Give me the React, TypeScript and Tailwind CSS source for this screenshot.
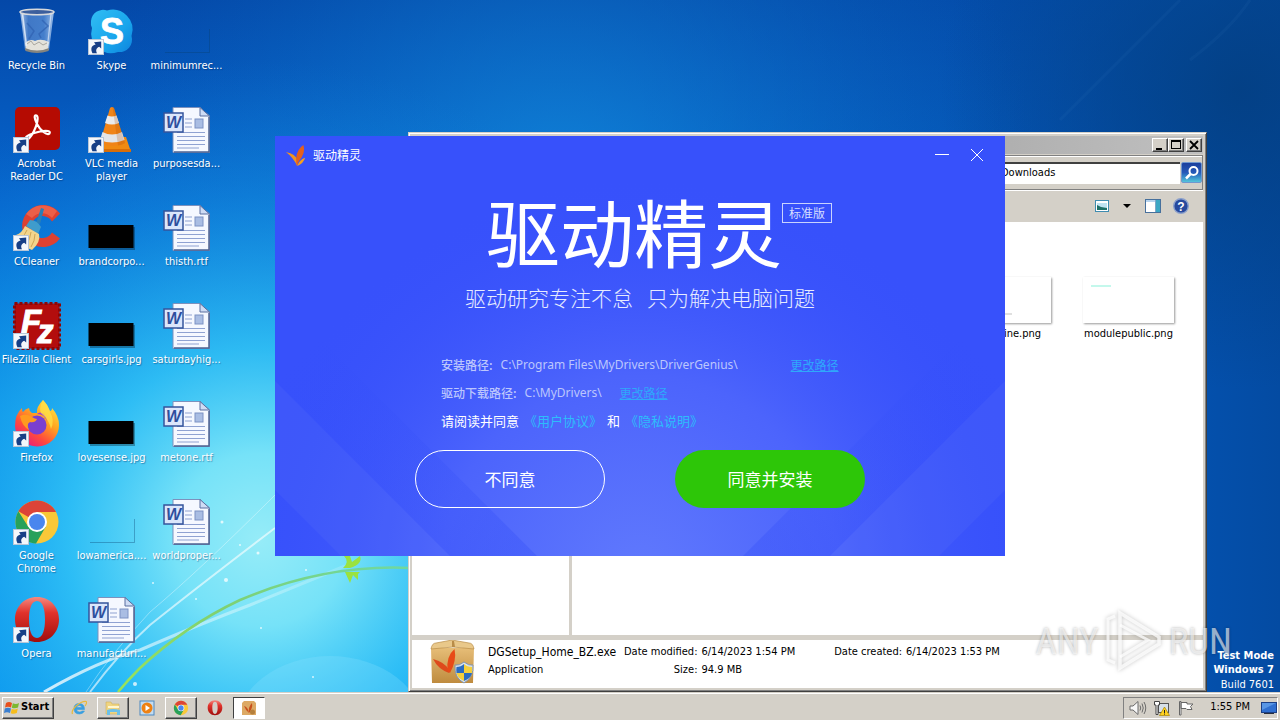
import type { ReactNode } from 'react';

const UI = "font-['Tahoma','DejaVu_Sans_Condensed','Noto_Sans',sans-serif]";
const CJK = "font-['Noto_Sans_CJK_SC',sans-serif]";
const RAISED = 'border border-t-white border-l-white border-r-[#404040] border-b-[#404040] shadow-[inset_-1px_-1px_0_#808080] bg-[#d4d0c8]';

function Shortcut() {
  return (
    <g>
      <rect x="0.5" y="31.5" width="15" height="15" fill="#f4f7fb" stroke="#b9c6d8" />
      <path d="M4.4 45.2C2.4 41 3.2 37.6 7.6 36.6L6 34.2L13.2 33.6V40.4L11.2 38.8C8 40.2 7.6 42.4 9 45.2Z" fill="#173f86" />
    </g>
  );
}

function Svg({ children }: { children: ReactNode }) {
  return (
    <svg viewBox="0 0 48 48" className="size-12 overflow-visible" aria-hidden="true">
      {children}
    </svg>
  );
}

function RecycleBin() {
  return (
    <Svg>
      <defs>
        <linearGradient id="bin" x1="0" x2="1">
          <stop offset="0" stopColor="#b7cdea" stopOpacity="0.95" />
          <stop offset="0.25" stopColor="#4f83cc" stopOpacity="0.8" />
          <stop offset="0.7" stopColor="#5f93d8" stopOpacity="0.7" />
          <stop offset="1" stopColor="#a5c4ea" />
        </linearGradient>
      </defs>
      <path d="M7 3L12 42Q24 47 36 42L41 3Z" fill="url(#bin)" />
      <path d="M12 35Q17 30 22 33Q28 30 36 34L35 41Q24 46 13 41Z" fill="#e4e2da" />
      <path d="M14 36l4-3 3 4 5-3 4 3 4-2" stroke="#a9a79f" fill="none" />
      <path d="M12 40Q24 45 36 40L35.5 43Q24 47 12.5 43Z" fill="#85847e" />
      <path d="M14 15l7 8-5 8M29 12l6 6-9 8 2 4" stroke="#2f61b0" strokeWidth="1.5" fill="none" opacity="0.7" />
      <path d="M9.500 6L13.500 38" stroke="#e9f2fd" strokeWidth="1.600" opacity="0.8" />
      <path d="M38 6L34.500 38" stroke="#dfeafa" strokeWidth="1.200" opacity="0.7" />
      <ellipse cx="24" cy="4" rx="17" ry="2.800" fill="#3c5f9d" stroke="#d7d9dc" strokeWidth="1.600" />
    </Svg>
  );
}

function Skype() {
  return (
    <Svg>
      <defs>
        <linearGradient id="sky" x1="0" y1="0" x2="1" y2="1">
          <stop offset="0" stopColor="#31bdf3" />
          <stop offset="0.6" stopColor="#18a5ec" />
          <stop offset="1" stopColor="#0f83dd" />
        </linearGradient>
      </defs>
      <path d="M3 13A12 12 0 0 1 19 2.500A20 20 0 0 1 43.500 28A12.500 12.500 0 0 1 30 44A20 20 0 0 1 4 20A12 12 0 0 1 3 13Z" fill="url(#sky)" />
      <text x="24" y="35.500" textAnchor="middle" fontFamily="Liberation Sans, sans-serif" fontWeight="bold" fontSize="36" fill="#fff" stroke="#fff" strokeWidth="0.800">S</text>
      <Shortcut />
    </Svg>
  );
}

function Acrobat() {
  return (
    <Svg>
      <rect x="2" y="1" width="45" height="43" rx="5" fill="#b50b02" />
      <path d="M13 33C11 30 20 27 27 25.500C34 24 38 25 36.500 27.500C34 30 27 24 24 18C21 12 21 8.500 23.500 9.500C26 11 24 19 21 25C18 31 14.500 35 13 33Z" fill="none" stroke="#fff" strokeWidth="2.200" />
      <Shortcut />
    </Svg>
  );
}

function Vlc() {
  return (
    <Svg>
      <path d="M11 31H38L43 46H9Z" fill="#f08a12" />
      <path d="M9 43H43V46H9Z" fill="#d86e08" />
      <path d="M22 2Q24 0 26 2L37 37Q24 43 12 37Z" fill="#f08418" />
      <path d="M19.500 9.500Q24 11.500 28.500 9.500L31 17Q24 20 17 17Z" fill="#e9eaec" />
      <path d="M14.500 26Q24 31 34 26L36.500 34Q24 39 12 34Z" fill="#e3e5e8" />
      <path d="M26 2L37 37Q34 39 30 39.500L24.500 1Z" fill="#a84a00" opacity="0.22" />
      <Shortcut />
    </Svg>
  );
}

function CCleaner() {
  return (
    <Svg>
      <path d="M47 11L39 19A11 11 0 1 0 39 30L47 36A21 21 0 1 1 47 11Z" fill="#dd4132" transform="translate(0 -1.500)" />
      <path d="M44 7L39 14A13 13 0 0 0 19 14L13 10A21 21 0 0 1 44 7Z" fill="#f26c51" opacity="0.7" />
      <path d="M28 4L31 5L27 20L23 19Z" fill="#2a7fb5" />
      <path d="M17 16Q24 16 28 23L25 30L13 22Z" fill="#3f9ccc" />
      <path d="M12 22L26 30Q28 38 19 46Q8 42 3 31Q9 29 12 22Z" fill="#f3d58c" />
      <path d="M14 26Q12 31 8 34M18 28Q17 35 14 40M22 30Q22 37 18 43" stroke="#cfa552" fill="none" />
      <Shortcut />
    </Svg>
  );
}

function FileZilla() {
  return (
    <Svg>
      <rect x="1.500" y="1.500" width="45" height="45" fill="#b30d0d" stroke="#8e0505" strokeWidth="3" strokeDasharray="3 2" />
      <text x="8" y="31" fontFamily="Liberation Sans, sans-serif" fontWeight="bold" fontStyle="italic" fontSize="33" fill="#fff" stroke="#fff">
        F<tspan x="24" y="41">z</tspan>
      </text>
      <Shortcut />
    </Svg>
  );
}

function Firefox() {
  return (
    <Svg>
      <defs>
        <linearGradient id="ff" x1="0.900" y1="0" x2="0.200" y2="1">
          <stop offset="0" stopColor="#fff04a" />
          <stop offset="0.400" stopColor="#ffa420" />
          <stop offset="0.700" stopColor="#ff4a3d" />
          <stop offset="1" stopColor="#e31587" />
        </linearGradient>
      </defs>
      <path d="M30 0Q35 5 37 11Q39 11 39 8Q46 16 46 25A22 21 0 0 1 2 26Q2 14 9 8Q9 11 10 12Q12 9 16 8Q16 11 19 13H24Q23 7 30 0Z" fill="url(#ff)" />
      <circle cx="24" cy="25" r="9.500" fill="#7a3fd0" />
      <path d="M24 14Q32 14 34 22Q34 18 31 14Q27 11 24 14Z" fill="#a33ad0" />
      <path d="M7 16Q13 13 19 17Q22 19 24 19Q22 23 17 22Q13 24 16 30Q9 26 7 16Z" fill="#ff9a1f" />
      <path d="M30 0Q35 5 37 12Q42 20 38 29Q36 20 30 15Q24 11 30 0Z" fill="#ffe14a" opacity="0.750" />
      <Shortcut />
    </Svg>
  );
}

function ChromeShapes() {
  return (
    <g>
      <circle cx="24" cy="24" r="21.500" fill="#f9c838" />
      <path d="M24 24L5.400 13.250A21.500 21.500 0 0 1 42.600 13.250L43 14H24Z" fill="#dc4437" />
      <path d="M5.400 13.250A21.500 21.500 0 0 0 23 45.500L32.600 29L24 24L15.400 29Z" fill="#28a15a" />
      <circle cx="24" cy="24" r="10" fill="#fff" />
      <circle cx="24" cy="24" r="8" fill="#4a86ee" />
    </g>
  );
}

function Chrome() {
  return (
    <Svg>
      <ChromeShapes />
      <Shortcut />
    </Svg>
  );
}

function OperaShapes() {
  return (
    <g>
      <defs>
        <linearGradient id="op" x1="0" y1="0" x2="0" y2="1">
          <stop offset="0" stopColor="#f58a80" />
          <stop offset="0.350" stopColor="#e0322b" />
          <stop offset="1" stopColor="#a00d0c" />
        </linearGradient>
      </defs>
      <path fillRule="evenodd" d="M24 1C37 1 46 11 46 23.500C46 36 37 46 24 46C11 46 2 36 2 23.500C2 11 11 1 24 1ZM24 5C18 5 16 14 16 23.500C16 33 18 42 24 42C30 42 32 33 32 23.500C32 14 30 5 24 5Z" fill="url(#op)" />
    </g>
  );
}

function Opera() {
  return (
    <Svg>
      <OperaShapes />
      <Shortcut />
    </Svg>
  );
}

function WordDoc() {
  return (
    <Svg>
      <path d="M10 1.500H37L46.500 10V46.500H10Z" fill="#f5f8ff" stroke="#7d91bd" />
      <path d="M46 11V46H11" fill="none" stroke="#4c6392" strokeWidth="1.500" />
      <path d="M37 1.500V10H46.500Z" fill="#cfdcf4" stroke="#5a6f9f" />
      <path d="M22 13H29M22 17H29M22 21H29M14 26.500H42M14 30.500H42M14 34.500H42M14 38.500H42M14 42H36" stroke="#8fa2d2" strokeWidth="1.200" />
      <rect x="32" y="13" width="8" height="9" fill="#a9bde3" stroke="#7d92c4" />
      <rect x="1" y="7" width="19" height="19" fill="#dbe6fb" stroke="#35549c" strokeWidth="1.500" />
      <text x="10.500" y="22" textAnchor="middle" fontFamily="Liberation Sans, sans-serif" fontStyle="italic" fontWeight="bold" fontSize="16" fill="#2e4f9e">W</text>
    </Svg>
  );
}

function BlackThumb() {
  return (
    <Svg>
      <rect x="2" y="23" width="45" height="23" fill="#000" opacity="0.300" />
      <rect x="0.500" y="21" width="45" height="23" fill="#000" />
    </Svg>
  );
}

function ClearThumb() {
  return (
    <Svg>
      <path d="M46.500 21V44.500H2" stroke="#0a3f6c" strokeOpacity="0.350" fill="none" />
    </Svg>
  );
}

const icons: { name: string; icon: ReactNode }[] = [
  { name: 'Recycle Bin', icon: <RecycleBin /> },
  { name: 'Acrobat Reader DC', icon: <Acrobat /> },
  { name: 'CCleaner', icon: <CCleaner /> },
  { name: 'FileZilla Client', icon: <FileZilla /> },
  { name: 'Firefox', icon: <Firefox /> },
  { name: 'Google Chrome', icon: <Chrome /> },
  { name: 'Opera', icon: <Opera /> },
  { name: 'Skype', icon: <Skype /> },
  { name: 'VLC media player', icon: <Vlc /> },
  { name: 'brandcorpo...', icon: <BlackThumb /> },
  { name: 'carsgirls.jpg', icon: <BlackThumb /> },
  { name: 'lovesense.jpg', icon: <BlackThumb /> },
  { name: 'lowamerica....', icon: <ClearThumb /> },
  { name: 'manufacturi...', icon: <WordDoc /> },
  { name: 'minimumrec...', icon: <ClearThumb /> },
  { name: 'purposesda...', icon: <WordDoc /> },
  { name: 'thisth.rtf', icon: <WordDoc /> },
  { name: 'saturdayhig...', icon: <WordDoc /> },
  { name: 'metone.rtf', icon: <WordDoc /> },
  { name: 'worldproper...', icon: <WordDoc /> },
];

function Wallpaper() {
  return (
    <svg viewBox="0 0 1280 692" preserveAspectRatio="none" className="absolute inset-0 size-full" aria-hidden="true">
      <defs>
        <linearGradient id="base" x1="0" y1="0" x2="0" y2="1">
          <stop offset="0" stopColor="#0448a8" />
          <stop offset="0.300" stopColor="#0667cf" />
          <stop offset="0.600" stopColor="#0594ee" />
          <stop offset="1" stopColor="#0097f6" />
        </linearGradient>
        <linearGradient id="rightShade" x1="0" x2="1">
          <stop offset="0.500" stopColor="#0450ac" stopOpacity="0" />
          <stop offset="0.940" stopColor="#0450ac" />
          <stop offset="1" stopColor="#044ba2" />
        </linearGradient>
        <radialGradient id="glow" gradientUnits="userSpaceOnUse" cx="260" cy="540" r="480">
          <stop offset="0" stopColor="#96ecf8" />
          <stop offset="0.180" stopColor="#76e2f8" />
          <stop offset="0.400" stopColor="#34c4f6" stopOpacity="0.850" />
          <stop offset="0.720" stopColor="#1796e4" stopOpacity="0.400" />
          <stop offset="1" stopColor="#0e78d4" stopOpacity="0" />
        </radialGradient>
        <radialGradient id="topGlow" gradientUnits="userSpaceOnUse" cx="560" cy="200" r="480">
          <stop offset="0" stopColor="#1592e0" stopOpacity="0.700" />
          <stop offset="1" stopColor="#0a6ac8" stopOpacity="0" />
        </radialGradient>
        <radialGradient id="corner" gradientUnits="userSpaceOnUse" cx="1240" cy="90" r="300">
          <stop offset="0" stopColor="#033e80" stopOpacity="0.850" />
          <stop offset="1" stopColor="#033e80" stopOpacity="0" />
        </radialGradient>
        <linearGradient id="beam" x1="0" y1="1" x2="1" y2="0">
          <stop offset="0" stopColor="#fff" stopOpacity="0.800" />
          <stop offset="1" stopColor="#fff" stopOpacity="0.150" />
        </linearGradient>
        <linearGradient id="stem" x1="0" y1="1" x2="1" y2="0">
          <stop offset="0" stopColor="#9be45a" />
          <stop offset="0.500" stopColor="#7fd070" />
          <stop offset="1" stopColor="#6fd8a0" />
        </linearGradient>
      </defs>
      <rect width="1280" height="692" fill="url(#base)" />
      <rect width="1280" height="692" fill="url(#rightShade)" />
      <rect width="1280" height="692" fill="url(#topGlow)" />
      <rect width="1280" height="692" fill="url(#corner)" />
      <rect width="1280" height="692" fill="url(#glow)" />
      <ellipse cx="330" cy="730" rx="95" ry="74" fill="#8fe3ff" opacity="0.250" />
      <path d="M44 692Q100 660 140 650Q200 624 250 605L345 566" fill="none" stroke="url(#beam)" strokeWidth="3" />
      <path d="M90 692Q120 652 150 625Q200 585 275 528" fill="none" stroke="#fff" strokeOpacity="0.600" strokeWidth="2" />
      <path d="M86 692Q110 655 150 612Q200 570 275 495" fill="none" stroke="#fff" strokeOpacity="0.350" />
      <path d="M1060 120Q1130 50 1180 0M1190 60Q1230 30 1250 0" fill="none" stroke="#4f8fd0" strokeOpacity="0.080" strokeWidth="3" />
      <path d="M118 692Q128 680 140 668Q185 626 240 600Q325 564 410 568" fill="none" stroke="url(#stem)" strokeWidth="2.500" />
      <path d="M343 568Q350 562 344 556H350L352 562L360 556Q363 564 350 568ZM345 572L350 583L353 575L358 580V574L360 572Z" fill="#9ae23f" />
      <g fill="#fff" opacity="0.750">
        <circle cx="222" cy="522" r="1.500" />
        <circle cx="226" cy="580" r="2" />
        <circle cx="153" cy="583" r="1" />
        <circle cx="196" cy="599" r="1" />
        <circle cx="135" cy="684" r="2" />
        <circle cx="261" cy="628" r="1" />
        <circle cx="313" cy="677" r="1" />
        <circle cx="258" cy="553" r="1.500" />
        <circle cx="306" cy="570" r="1" />
        <circle cx="240" cy="545" r="1" />
      </g>
    </svg>
  );
}

function Leaf() {
  return (
    <g>
      <path d="M0 8Q11 10 13.500 18L13 24Q8 14 0 8Z" fill="#f2941e" />
      <path d="M12.500 24Q9 8 20 0Q23 9 14.500 19Z" fill="#e4601d" />
      <path d="M13 24Q15 17 22 14.500Q20 21 13 24Z" fill="#f6a01c" />
    </g>
  );
}

function BoxIcon() {
  return (
    <svg viewBox="0 0 46 46" className="size-[46px]" aria-hidden="true">
      <defs>
        <linearGradient id="box" x1="0" y1="0" x2="0" y2="1">
          <stop offset="0" stopColor="#e6bd77" />
          <stop offset="1" stopColor="#bf8b3e" />
        </linearGradient>
      </defs>
      <path d="M1 8L44 8L43 43H2Z" fill="url(#box)" />
      <path d="M1 9Q2 3 6 3L22 0L39 3Q43 3 44 9L23 7Z" fill="#e9c88a" stroke="#b98c48" strokeWidth="0.700" />
      <path d="M22 1L22 7L25 7L24 1Z" fill="#b98c48" />
      <path d="M3 19Q14 22 18.500 29L19 33Q8 29 3 19Z" fill="#de4a1c" />
      <path d="M17.500 31Q16 16 24.500 9Q27 20 20 33Z" fill="#e84a17" />
      <path d="M34 22Q39 26 43 25Q44 37 34 43Q24 38 25 25Q29 26 34 22Z" fill="#d8e2ee" stroke="#8496ac" />
      <path d="M34 24V33H26.500Q26 30 26.500 27Q31 27 34 24Z" fill="#2b6cc0" />
      <path d="M34 24V33H42V27Q37 27 34 24Z" fill="#f4d03c" />
      <path d="M26.500 33H34V41Q28 38.500 26.500 33Z" fill="#f4d03c" />
      <path d="M42 33H34V41Q40.500 38.500 42 33Z" fill="#2b6cc0" />
    </svg>
  );
}

function CaptionButton({ label, children }: { label: string; children: ReactNode }) {
  return (
    <button aria-label={label} className={`flex h-[14px] w-4 items-center justify-center ${RAISED}`}>
      <svg viewBox="0 0 12 10" className="h-[10px] w-3" aria-hidden="true" shapeRendering="crispEdges">
        {children}
      </svg>
    </button>
  );
}

function Explorer() {
  return (
    <section aria-label="Downloads" className="absolute top-[132px] bottom-0 left-[408px] flex w-[799px] flex-col border border-t-[#d4d0c8] border-l-[#d4d0c8] border-r-[#404040] border-b-[#404040] bg-[#d4d0c8] p-[3px] shadow-[inset_1px_1px_0_#fff,inset_-1px_-1px_0_#808080] text-[11px] text-black">
      <div className="flex h-[18px] shrink-0 items-center justify-end bg-linear-to-r from-[#808080] to-[#c0c0c0] pr-px">
        <CaptionButton label="Minimize"><path d="M2 8H8V10H2Z" /></CaptionButton>
        <CaptionButton label="Maximize"><path fillRule="evenodd" d="M1 0H11V9H1ZM2 2V8H10V2Z" /></CaptionButton>
        <span className="w-[2px]" />
        <CaptionButton label="Close"><path d="M2 1L10 9M10 1L2 9" stroke="#000" strokeWidth="1.800" shapeRendering="auto" /></CaptionButton>
      </div>
      <div className="mt-[1px] flex h-[35px] shrink-0 items-center gap-px border-t border-b border-r border-[#808080] shadow-[inset_0_1px_0_#fff,0_1px_0_#fff]">
        <label className="flex h-[21px] flex-1 items-center border-t-2 border-[#404040] bg-white shadow-[0_1px_0_#fff]">
          <input aria-label="Address" defaultValue="Downloads" className="ml-[589px] w-40 min-w-0 outline-none" />
        </label>
        <button aria-label="Search" className="flex size-[21px] items-center justify-center rounded-xs border border-[#6f97cf] bg-linear-to-b from-[#1c3f9d] via-[#2659b8] to-[#55c4da]">
          <svg viewBox="0 0 16 16" className="size-4" fill="none" stroke="#fff" aria-hidden="true">
            <circle cx="9.500" cy="6" r="4" strokeWidth="2" />
            <path d="M6.500 9L2 13.500" strokeWidth="2.500" />
          </svg>
        </button>
      </div>
      <div className="flex h-8 shrink-0 items-center justify-end gap-3 pr-[14px]">
        <svg viewBox="0 0 14 12" className="h-3 w-[14px]" aria-hidden="true">
          <rect x="0.500" y="0.500" width="13" height="11" fill="#fff" stroke="#3f8cb0" />
          <path d="M2 3H12V9H2Z" fill="#bfe3f2" />
          <path d="M2 5L6 7L12 8V10H2Z" fill="#1d6f67" />
        </svg>
        <svg viewBox="0 0 8 4" className="mx-[2px] h-1 w-2" aria-hidden="true"><path d="M0 0H8L4 4Z" /></svg>
        <svg viewBox="0 0 16 14" className="h-[14px] w-4" aria-hidden="true">
          <rect x="0.500" y="0.500" width="15" height="13" fill="#fff" stroke="#47709c" />
          <path d="M1 1H15V3H1Z" fill="#b8d4ee" />
          <rect x="11" y="1" width="4" height="12" fill="#3ba7c4" />
          <path d="M10.500 1V13" stroke="#7fa6c8" />
        </svg>
        <svg viewBox="0 0 16 16" className="size-4" aria-hidden="true">
          <circle cx="8" cy="8" r="7.300" fill="#27499e" stroke="#8ba0cc" strokeWidth="1.400" />
          <text x="8" y="12.500" textAnchor="middle" fontFamily="Liberation Sans, sans-serif" fontWeight="bold" fontSize="12" fill="#fff">?</text>
        </svg>
      </div>
      <div className="flex min-h-0 flex-1">
        <div className="w-[157px] bg-white" />
        <div className="ml-[3px] flex flex-1 justify-end gap-8 bg-white pt-[55px] pr-[29px]">
          <figure className="flex w-[91px] flex-col items-end gap-[3px]">
            <div className="flex h-[46px] w-full items-end bg-white pb-2 pl-11 shadow-[1px_1px_2px_#999]"><span className="h-[2px] w-2 bg-[#e0e0e0]" /></div>
            <figcaption className="pr-[10px] leading-4">ine.png</figcaption>
          </figure>
          <figure className="flex w-[91px] flex-col items-center gap-[3px]">
            <div className="h-[46px] w-full bg-white pt-2 pl-2 shadow-[1px_1px_2px_#999]"><span className="block h-[2px] w-5 bg-[#c4f8ec]" /></div>
            <figcaption className="leading-4">modulepublic.png</figcaption>
          </figure>
        </div>
      </div>
      <div className="mt-[5px] flex h-[48px] shrink-0 bg-white pl-[18px]">
        <BoxIcon />
        <div className="ml-3 w-[136px] pt-[3px] leading-[18px] whitespace-nowrap">
          <p className="text-[12px]">DGSetup_Home_BZ.exe</p>
          <p>Application</p>
        </div>
        <dl className="grid h-[39px] grid-cols-[auto_auto] gap-x-1 pt-[3px] leading-[18px] whitespace-nowrap">
          <dt className="text-right">Date modified:</dt>
          <dd>6/14/2023 1:54 PM</dd>
          <dt className="text-right">Size:</dt>
          <dd>94.9 MB</dd>
        </dl>
        <dl className="ml-[39px] flex gap-1 pt-[3px] leading-[18px] whitespace-nowrap">
          <dt>Date created:</dt>
          <dd>6/14/2023 1:53 PM</dd>
        </dl>
      </div>
    </section>
  );
}

function Installer() {
  return (
    <section aria-label="驱动精灵" className={`absolute top-[136px] left-[275px] w-[730px] overflow-hidden bg-[#3751fb] pb-12 text-white ${CJK}`}>
      <svg viewBox="0 0 730 420" className="absolute inset-0 size-full" aria-hidden="true">
        <defs>
          <radialGradient id="dlg" gradientUnits="userSpaceOnUse" cx="365" cy="440" r="400">
            <stop offset="0" stopColor="#6079fd" />
            <stop offset="0.500" stopColor="#4c64fc" />
            <stop offset="1" stopColor="#3751fb" stopOpacity="0" />
          </radialGradient>
          <linearGradient id="bandL" gradientUnits="userSpaceOnUse" x1="20" y1="220" x2="220" y2="420">
            <stop offset="0" stopColor="#2f4bf8" stopOpacity="0" />
            <stop offset="1" stopColor="#2f4bf8" stopOpacity="0.300" />
          </linearGradient>
          <linearGradient id="bandR" gradientUnits="userSpaceOnUse" x1="710" y1="220" x2="510" y2="420">
            <stop offset="0" stopColor="#2f4bf8" stopOpacity="0" />
            <stop offset="1" stopColor="#2f4bf8" stopOpacity="0.300" />
          </linearGradient>
        </defs>
        <rect width="730" height="420" fill="url(#dlg)" />
        <path d="M0 245L175 420H66L0 354Z" fill="#5a71fb" opacity="0.200" />
        <path d="M730 245L555 420H664L730 354Z" fill="#5a71fb" opacity="0.200" />
        <path d="M0 245L175 420H262L0 158Z" fill="url(#bandL)" />
        <path d="M730 245L555 420H468L730 158Z" fill="url(#bandR)" />
      </svg>
      <header className="relative flex h-[38px] items-center pl-[10px] text-[12px]">
        <svg viewBox="0 0 23 24" className="mr-[6px] h-[21px] w-[22px]" aria-hidden="true"><Leaf /></svg>
        <span className="flex-1">驱动精灵</span>
        <button aria-label="最小化" className="mr-[21px]">
          <svg viewBox="0 0 14 14" className="size-[14px]" stroke="#fff" aria-hidden="true"><path d="M0 6.500H14" /></svg>
        </button>
        <button aria-label="关闭" className="mr-[21px]">
          <svg viewBox="0 0 14 14" className="size-[14px]" stroke="#fff" aria-hidden="true"><path d="M1 1L13 13M13 1L1 13" /></svg>
        </button>
      </header>
      <div className="relative mt-[18px] flex items-start pl-[211px]">
        <h1 className="text-[74px] leading-[76px]">驱动精灵</h1>
        <span className="mt-[11px] flex h-5 w-[50px] items-center justify-center border border-[#c9d3fe] text-[12px] text-[#d5ddff]">标准版</span>
      </div>
      <p className="relative mt-[15px] flex justify-center gap-[14px] text-[21px] leading-7 font-light text-[#e6ebff]">
        <span>驱动研究专注不怠</span>
        <span>只为解决电脑问题</span>
      </p>
      <div className="relative mt-10 pl-[166px] text-[12px] leading-7">
        <p className="flex text-[#bcc6fd]">
          <span className="font-medium">安装路径:</span>
          <span className="ml-2 w-[290px] font-['Noto_Sans',sans-serif]">C:\Program Files\MyDrivers\DriverGenius\</span>
          <a href="#install-path" className="text-[#2fa8fb] underline">更改路径</a>
        </p>
        <p className="flex text-[#bcc6fd]">
          <span className="font-medium">驱动下载路径:</span>
          <span className="ml-2 w-[95px] font-['Noto_Sans',sans-serif]">C:\MyDrivers\</span>
          <a href="#download-path" className="text-[#2fa8fb] underline">更改路径</a>
        </p>
        <p className="flex gap-[5px] text-[13px]">
          <span>请阅读并同意</span>
          <a href="#agreement" className="text-[#2dbdfb]">《用户协议》</a>
          <span>和</span>
          <a href="#privacy" className="text-[#2dbdfb]">《隐私说明》</a>
        </p>
      </div>
      <div className="relative mt-[15px] flex justify-center gap-[70px] text-[17px]">
        <button className="h-[58px] w-[190px] rounded-full border border-white">不同意</button>
        <button className="h-[58px] w-[190px] rounded-full bg-[#2dc608]">同意并安装</button>
      </div>
    </section>
  );
}

function Watermark() {
  return (
    <div className="pointer-events-none absolute right-[48px] bottom-[18px] flex h-[66px] items-center gap-[6px] font-['Roboto_Condensed','Liberation_Sans_Narrow',sans-serif] text-[37px] leading-none font-normal text-white/60 [text-shadow:0_0_3px_rgba(0,0,0,0.3)]">
      <span>ANY</span>
      <svg viewBox="0 0 58 66" className="h-[66px] w-[58px] drop-shadow-[0_0_2px_rgba(0,0,0,0.3)]" fill="none" stroke="#fff" strokeOpacity="0.750" aria-hidden="true">
        <path d="M10 8L3 11V52L10 55" strokeWidth="3" />
        <path d="M15 5L54 29V36L15 60Z" strokeWidth="3.500" />
        <path d="M15 17L43 32L15 49" strokeWidth="3" />
      </svg>
      <span>RUN</span>
    </div>
  );
}

function TaskButton({ label, className, children }: { label: string; className: string; children: ReactNode }) {
  return (
    <button aria-label={label} className={`flex h-[22px] w-8 items-center justify-center ${className}`}>
      <svg viewBox="0 0 16 16" className="size-4" aria-hidden="true">{children}</svg>
    </button>
  );
}

function Taskbar() {
  return (
    <nav aria-label="Taskbar" className="flex h-7 shrink-0 items-center border-t border-[#d4d0c8] bg-[#d4d0c8] px-[2px] pt-[2px] text-[11px] text-black shadow-[inset_0_1px_0_#fff]">
      <button className={`mr-[9px] flex h-[22px] w-[52px] items-center gap-px pl-[1px] text-[11px] font-bold ${RAISED}`}>
        <svg viewBox="0 0 16 16" className="size-4 shrink-0" aria-hidden="true">
          <path d="M2 3Q5 1 8 3L7 7.500Q4 6 1 7.500Z" fill="#e8501c" />
          <path d="M8.800 3.300Q12 5 15 3L14 7.500Q11 9 7.800 7.800Z" fill="#7cb82f" />
          <path d="M0.800 8.500Q4 7 7 8.500L6 13Q3 11.500 0 13Z" fill="#3a7fd0" />
          <path d="M7.700 9Q11 10 13.800 8.500L12.800 13Q10 14.500 6.700 13.300Z" fill="#f6bd1c" />
        </svg>
        Start
      </button>
      <div className="flex flex-1 gap-[2px]">
        <TaskButton label="Internet Explorer" className="">
          <path d="M13.500 9.500H5.500Q6 12 8.500 12Q10 12 11 11H13.500Q12 14 8.500 14Q3 14 3 8.500Q3 3.500 8.300 3.500Q13.500 3.500 13.500 9.500ZM5.600 7.500H11Q10.500 5.500 8.300 5.500Q6 5.500 5.600 7.500Z" fill="#3a9fe0" stroke="#3a9fe0" strokeWidth="0.600" fillRule="evenodd" />
          <path d="M1.500 14Q0 11 5 6Q11 1 15 1.500Q16.500 2.500 14 6" fill="none" stroke="#e9b93a" strokeWidth="1.200" />
        </TaskButton>
        <TaskButton label="Windows Explorer" className={RAISED}>
          <path d="M1 2H6L7 4H14V14H1Z" fill="#efd481" stroke="#c9a84c" strokeWidth="0.500" />
          <path d="M3 6H14V8H3Z" fill="#fff6cf" />
          <path d="M2 10Q8 8 15 10V15H12V12H5V15H2Z" fill="#6cc0e8" />
        </TaskButton>
        <TaskButton label="Windows Media Player" className="">
          <rect x="1" y="1" width="14" height="14" fill="#c3dcf1" stroke="#4d88bf" />
          <circle cx="8" cy="8" r="5.500" fill="#ee8113" />
          <path d="M6.500 5L11 8L6.500 11Z" fill="#fff" />
        </TaskButton>
        <TaskButton label="Google Chrome" className={RAISED}>
          <g transform="scale(0.333)"><ChromeShapes /></g>
        </TaskButton>
        <TaskButton label="Opera" className="">
          <g transform="scale(0.333)"><OperaShapes /></g>
        </TaskButton>
        <TaskButton label="驱动精灵" className="border border-t-[#404040] border-l-[#404040] border-r-white border-b-white bg-white">
          <path d="M1 3L3 1H13L15 3V15H1Z" fill="#dda964" />
          <path d="M3 6Q7 7 8 13Q7 7 11 3Q12 8 8 13Q5 11 3 6Z" fill="#c8501c" />
          <circle cx="11.500" cy="12" r="2.500" fill="#b5803c" />
        </TaskButton>
      </div>
      <div className="flex h-[22px] items-center border border-t-[#808080] border-l-[#808080] border-r-white border-b-white pl-[5px]">
        <svg viewBox="0 0 18 16" className="h-4 w-[18px]" fill="none" stroke="#6b6b6b" aria-hidden="true">
          <path d="M1 6H4L9 1.500V14.500L4 10H1Z" fill="#f7f7f7" />
          <path d="M11 5.500Q12.500 8 11 10.500M13 3.500Q15.500 8 13 12.500M15 2Q18.500 8 15 14" />
        </svg>
        <svg viewBox="0 0 18 16" className="ml-[6px] h-4 w-[18px]" aria-hidden="true">
          <rect x="5.500" y="3.500" width="10" height="9" fill="#d7e0e8" stroke="#555" />
          <path d="M1.500 1.500H6.500V5H5V14.500H3V5H1.500Z" fill="#fff" stroke="#444" />
          <path d="M11.500 7L16.500 15.500H6.500Z" fill="#ffd21f" stroke="#a88400" strokeWidth="0.700" />
          <path d="M11.500 10V13M11.500 13.600V14.600" stroke="#222" />
        </svg>
        <svg viewBox="0 0 18 16" className="ml-[6px] h-4 w-[18px]" fill="#fff" stroke="#666" aria-hidden="true">
          <path d="M2.500 1.500H4V15H2.500ZM4 2.500H10V4H16L13.500 6.500L15 9.500H10L9 8.500H4Z" />
        </svg>
        <time className="ml-[15px]">1:55 PM</time>
        <button aria-label="Show desktop" className="ml-[11px]">
          <svg viewBox="0 0 16 14" className="h-[14px] w-4" aria-hidden="true">
            <rect x="0.500" y="1.500" width="15" height="10" fill="#2f6fd0" stroke="#1b3f86" />
            <path d="M1 2H15L1 9Z" fill="#6aa6ee" opacity="0.700" />
            <path d="M3 12.500H13" stroke="#2a2f3d" />
          </svg>
        </button>
      </div>
    </nav>
  );
}

export default function App() {
  return (
    <div className={`flex h-screen flex-col overflow-hidden ${UI}`}>
      <main className="relative min-h-0 flex-1 overflow-hidden">
        <Wallpaper />
        <ul className="relative -ml-px grid w-max auto-cols-[75px] grid-flow-col grid-rows-[repeat(7,98px)]">
          {icons.map(({ name, icon }) => (
            <li key={name} className="flex flex-col items-center gap-[3px] pt-2 text-center text-[11px] leading-[13px] text-white">
              {icon}
              <span className="max-w-[74px] [text-shadow:1px_1px_1px_rgba(0,30,80,0.4)]">{name}</span>
            </li>
          ))}
        </ul>
        <Explorer />
        <Installer />
        <div className="absolute right-[6px] bottom-0 text-right text-[11px] leading-[14px] text-white">
          <p className="font-bold">Test Mode</p>
          <p className="font-bold">Windows 7</p>
          <p className="pt-px">Build 7601</p>
        </div>
        <Watermark />
      </main>
      <Taskbar />
    </div>
  );
}
